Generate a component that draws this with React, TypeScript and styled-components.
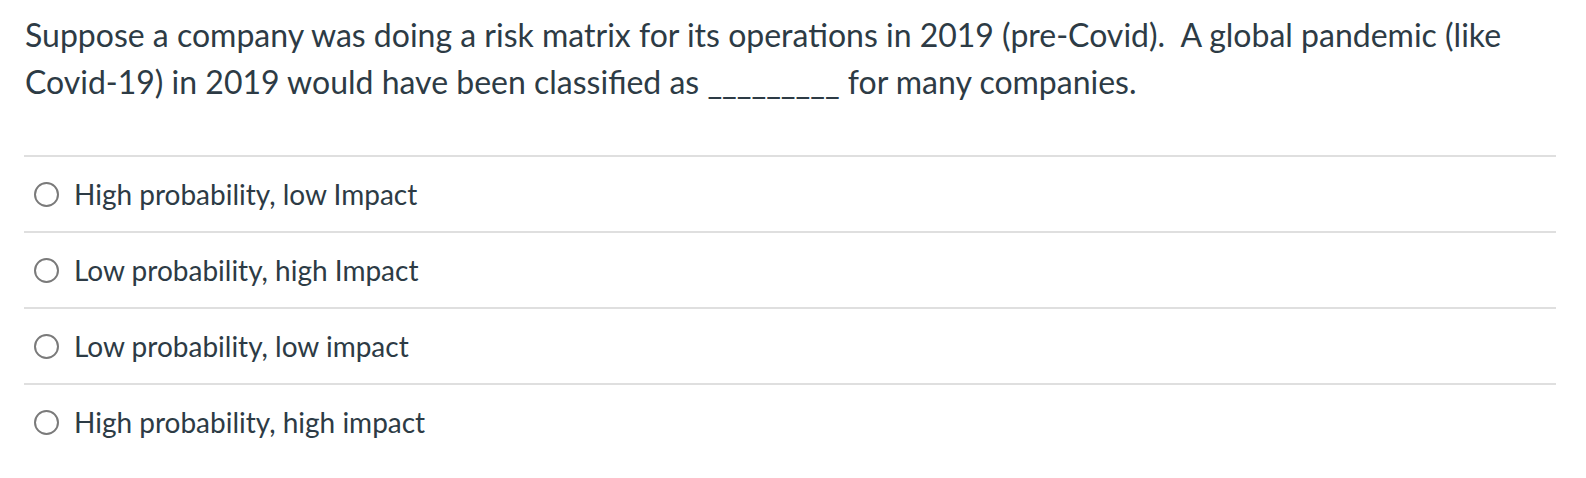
import React from 'react';
import styled, { createGlobalStyle } from 'styled-components';

const GlobalStyle = createGlobalStyle`
  html, body {
    margin: 0;
    padding: 0;
    background: #ffffff;
  }
  body {
    font-family: Lato, "Noto Sans", "Liberation Sans", sans-serif;
    color: #2d3b45;
  }
`;

const Page = styled.div`
  padding: 11px 30px 0 24px;
`;

const QuestionText = styled.p`
  margin: 0 0 0 1px;
  font-size: 32px;
  line-height: 47px;
`;

const AnswerList = styled.div`
  margin-top: 50px;
`;

const AnswerRow = styled.label`
  box-sizing: border-box;
  display: flex;
  align-items: center;
  gap: 15px;
  height: 76px;
  padding-left: 10px;
  border-top: 2px solid #dfdfdf;
  cursor: pointer;
`;

const RadioCircle = styled.span`
  box-sizing: border-box;
  width: 25px;
  height: 25px;
  border-radius: 50%;
  border: 2px solid #7a7a7a;
  background: #fff;
  flex-shrink: 0;
`;

const AnswerText = styled.span`
  font-size: 28px;
  line-height: 34px;
`;

const answers = [
  'High probability, low Impact',
  'Low probability, high Impact',
  'Low probability, low impact',
  'High probability, high impact',
];

export default function App() {
  return (
    <>
      <GlobalStyle />
      <Page>
        <QuestionText>
          Suppose a company was doing a risk matrix for its operations in 2019 (pre-Covid).&nbsp; A global pandemic (like
          <br />
          Covid-19) in 2019 would have been classified as _________ for many companies.
        </QuestionText>
        <AnswerList>
          {answers.map((a) => (
            <AnswerRow key={a}>
              <RadioCircle />
              <AnswerText>{a}</AnswerText>
            </AnswerRow>
          ))}
        </AnswerList>
      </Page>
    </>
  );
}
